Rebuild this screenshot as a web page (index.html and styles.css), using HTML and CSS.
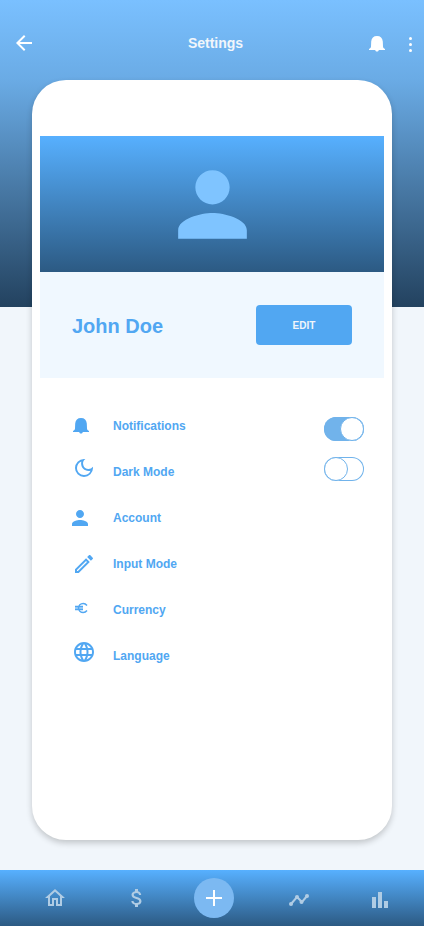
FILE: index.html
```html
<!DOCTYPE html>
<html lang="en">
<head>
<meta charset="utf-8">
<meta name="viewport" content="width=device-width, initial-scale=1">
<title>Settings</title>
<link rel="stylesheet" href="styles.css">
</head>
<body>
<header class="topbar">
  <button class="icon-button" type="button" aria-label="Back">
    <svg width="24" height="24" viewBox="0 0 24 24"><path d="M20 11H7.830l5.590-5.590L12 4l-8 8 8 8 1.410-1.410L7.830 13H20v-2z"/></svg>
  </button>
  <h1 class="title">Settings</h1>
  <div class="actions">
    <button class="icon-button" type="button" aria-label="Notifications">
      <svg width="24" height="24" viewBox="0 0 24 24"><path d="M12 5C8.500 5 6.500 7 6.200 10.500L6 15.500c0 1.300-.8 2-2 2.500v1h6.200c.3 1 .9 1.500 1.800 1.500s1.500-.5 1.800-1.500H20v-1c-1.200-.5-2-1.200-2-2.500l-.2-5C17.500 7 15.500 5 12 5z"/></svg>
    </button>
    <button class="icon-button" type="button" aria-label="More">
      <svg width="10" height="24" viewBox="0 0 10 24"><circle cx="5.500" cy="7.500" r="1.500"/><circle cx="5.500" cy="13.500" r="1.500"/><circle cx="5.500" cy="19.500" r="1.500"/></svg>
    </button>
  </div>
</header>

<main class="card">
  <section class="profile">
    <div class="cover">
      <svg width="103" height="103" viewBox="0 0 24 24"><path d="M12 12c2.210 0 4-1.790 4-4s-1.790-4-4-4-4 1.790-4 4 1.790 4 4 4zm0 2c-2.670 0-8 1.340-8 4v2h16v-2c0-2.660-5.330-4-8-4z"/></svg>
    </div>
    <div class="identity">
      <h2 class="name">John Doe</h2>
      <button class="edit" type="button">EDIT</button>
    </div>
  </section>

  <section class="settings">
    <ul class="options">
      <li class="option">
        <svg width="24" height="32" viewBox="0 0 24 32"><path d="M9 8C5.500 8 3.500 10 3.200 13.500L3 18.500c0 1.300-.8 2-2 2.500v1h6.200c.3 1 .9 1.500 1.800 1.500s1.500-.5 1.800-1.500H17v-1c-1.200-.5-2-1.200-2-2.500l-.2-5C14.500 10 12.500 8 9 8z"/></svg>
        <label for="notifications">Notifications</label>
      </li>
      <li class="option">
        <svg width="24" height="32" viewBox="0 0 24 32"><path d="M9.370 5.510A7.350 7.350 0 0 0 9.100 7.500c0 4.080 3.320 7.400 7.400 7.400.68 0 1.350-.09 1.990-.27A7.014 7.014 0 0 1 12 19c-3.860 0-7-3.140-7-7 0-2.930 1.810-5.450 4.370-6.490zM12 3a9 9 0 1 0 9 9c0-.46-.04-.92-.1-1.360a5.389 5.389 0 0 1-4.400 2.260 5.403 5.403 0 0 1-3.140-9.800C12.920 3.040 12.460 3 12 3z"/></svg>
        <label for="dark-mode">Dark Mode</label>
      </li>
      <li class="option">
        <svg width="24" height="32" viewBox="0 0 24 32"><path d="M8 16c2.210 0 4-1.790 4-4s-1.790-4-4-4-4 1.790-4 4 1.790 4 4 4zm0 2c-2.670 0-8 1.340-8 4v2h16v-2c0-2.660-5.330-4-8-4z"/></svg>
        <span>Account</span>
      </li>
      <li class="option">
        <svg width="24" height="32" viewBox="0 -4 24 32"><path d="M14.060 9.020l.92.92L5.920 19H5v-.92l9.060-9.060M17.660 3c-.25 0-.51.1-.7.290l-1.830 1.830 3.750 3.750 1.830-1.830a.996.996 0 0 0 0-1.410l-2.340-2.340c-.2-.2-.45-.29-.71-.29zm-3.600 3.190L3 17.250V21h3.750L17.810 9.940l-3.750-3.750z"/></svg>
        <span>Input Mode</span>
      </li>
      <li class="option">
        <svg width="24" height="32" viewBox="0 0 24 32"><path class="faint" d="M3 12h8v4H3z"/><path class="line" d="M15 11.500C14 10.200 12.800 9.500 11.200 9.500c-2.700 0-4.700 2-4.700 4.500s2 4.500 4.700 4.500c1.600 0 2.800-.7 3.800-2M3 12.500h8M3 15.500h8"/></svg>
        <span>Currency</span>
      </li>
      <li class="option">
        <svg width="24" height="32" viewBox="0 0 24 32"><path d="M11.990 2C6.470 2 2 6.480 2 12s4.470 10 9.990 10C17.520 22 22 17.520 22 12S17.520 2 11.990 2zm6.930 6h-2.950a15.650 15.650 0 0 0-1.380-3.560A8.030 8.030 0 0 1 18.920 8zM12 4.040c.83 1.200 1.480 2.530 1.910 3.960h-3.820c.43-1.430 1.080-2.760 1.910-3.960zM4.260 14C4.100 13.360 4 12.690 4 12s.1-1.360.26-2h3.380c-.08.66-.14 1.320-.14 2s.06 1.340.14 2H4.260zm.82 2h2.950c.32 1.250.78 2.450 1.380 3.560A7.987 7.987 0 0 1 5.080 16zm2.950-8H5.080a7.987 7.987 0 0 1 4.330-3.560A15.650 15.650 0 0 0 8.030 8zM12 19.960c-.83-1.200-1.480-2.530-1.910-3.960h3.820c-.43 1.430-1.080 2.760-1.910 3.960zM14.340 14H9.660c-.09-.66-.16-1.320-.16-2s.07-1.350.16-2h4.680c.09.65.16 1.320.16 2s-.07 1.340-.16 2zm.25 5.560c.6-1.110 1.060-2.310 1.380-3.560h2.950a8.030 8.030 0 0 1-4.330 3.560zM16.360 14c.08-.66.14-1.320.14-2s-.06-1.340-.14-2h3.380c.16.64.26 1.310.26 2s-.1 1.360-.26 2h-3.380z"/></svg>
        <span>Language</span>
      </li>
    </ul>
    <div class="toggles">
      <input class="toggle" type="checkbox" id="notifications" checked>
      <input class="toggle" type="checkbox" id="dark-mode">
    </div>
  </section>
</main>

<nav class="tabs" aria-label="Main">
  <a class="tab" href="#home" aria-label="Home"><svg width="24" height="24" viewBox="0 0 24 24"><path d="M12 5.690l5 4.500V18h-2v-6H9v6H7v-7.810l5-4.500M12 3L2 12h3v8h6v-6h2v6h6v-8h3L12 3z"/></svg></a>
  <a class="tab" href="#money" aria-label="Money"><svg width="24" height="24" viewBox="0 0 24 24"><path d="M11.800 10.900c-2.270-.59-3-1.200-3-2.150 0-1.090 1.010-1.850 2.700-1.850 1.780 0 2.440.85 2.500 2.100h2.210c-.07-1.720-1.120-3.300-3.210-3.810V3h-3v2.160c-1.940.42-3.500 1.680-3.500 3.610 0 2.310 1.910 3.460 4.700 4.130 2.500.6 3 1.480 3 2.410 0 .69-.49 1.790-2.700 1.790-2.060 0-2.870-.92-2.980-2.100h-2.200c.12 2.190 1.760 3.420 3.680 3.830V21h3v-2.150c1.950-.37 3.500-1.500 3.500-3.550 0-2.840-2.430-3.810-4.700-4.400z"/></svg></a>
  <a class="tab add" href="#add" aria-label="Add"><svg width="24" height="24" viewBox="0 0 24 24"><path d="M11 4h2v7h7v2h-7v7h-2v-7H4v-2h7z"/></svg></a>
  <a class="tab" href="#trends" aria-label="Trends"><svg width="24" height="24" viewBox="0 0 24 24"><path class="trend" d="M4 18l6-7 5 5 5-6"/><circle cx="4" cy="18" r="2"/><circle cx="10" cy="11" r="2"/><circle cx="14.500" cy="16" r="2"/><circle cx="20" cy="10" r="2"/></svg></a>
  <a class="tab" href="#stats" aria-label="Statistics"><svg width="24" height="24" viewBox="0 0 24 24"><path d="M4 11h4v11H4zM10 6h4v16h-4zM16 15h4v7h-4z"/></svg></a>
</nav>
</body>
</html>
```
FILE: styles.css
```css
*,
*::before {
  box-sizing: border-box;
}

body {
  margin: 0;
  min-height: 100vh;
  display: flex;
  flex-direction: column;
  font-family: "Liberation Sans", Arial, sans-serif;
  font-weight: 700;
  color: #51a7f2;
  background: linear-gradient(#7ac0ff, #6aabe5 80px, #23425f) 0 0 / 100% 307px no-repeat, #f1f6fb;
}

svg {
  display: block;
  fill: currentColor;
}

.topbar {
  display: grid;
  grid-template-columns: 1fr auto 1fr;
  align-items: center;
  height: 80px;
  padding: 6px 9px 0 12px;
  color: #fff;
}

.title {
  margin: 0;
  padding-left: 4px;
  font-size: 14px;
  line-height: 20px;
  color: #f1f6fb;
}

.icon-button {
  justify-self: start;
  padding: 0;
  border: 0;
  background: none;
  color: inherit;
}

.actions {
  justify-self: end;
  display: flex;
  gap: 16px;
}

.card {
  flex: 1;
  margin: 0 32px 30px;
  padding: 56px 8px;
  border-radius: 34px;
  background: #fff;
  box-shadow: 0 3px 6px rgba(0, 0, 0, 0.2);
}

.cover {
  display: flex;
  align-items: center;
  justify-content: center;
  height: 136px;
  color: #7fc4ff;
  background: linear-gradient(#57b0ff, #2c5a83);
}

.identity {
  display: flex;
  align-items: center;
  justify-content: space-between;
  height: 106px;
  padding: 0 32px;
  background: #f0f8ff;
}

.name {
  margin: 0;
  padding-top: 2px;
  font-size: 20px;
  line-height: 24px;
}

.edit {
  width: 96px;
  height: 40px;
  padding: 0;
  border: 0;
  border-radius: 4px;
  background: #51a7f2;
  color: #f1f6fb;
  font: inherit;
  font-size: 10px;
}

.settings {
  display: flex;
  justify-content: space-between;
  padding: 25px 20px 0 32px;
}

.options {
  margin: 0;
  padding: 0;
  list-style: none;
}

.option {
  display: flex;
  align-items: center;
  gap: 17px;
  height: 46px;
  font-size: 12px;
  line-height: 16px;
}

.line {
  fill: none;
  stroke: currentColor;
  stroke-width: 1.4;
}

.faint {
  opacity: 0.5;
}

.toggles {
  display: flex;
  flex-direction: column;
  gap: 16px;
  padding-top: 14px;
}

.toggle {
  appearance: none;
  display: flex;
  width: 40px;
  height: 24px;
  margin: 0;
  border-radius: 12px;
  background: #fff;
  box-shadow: inset 0 0 0 1px #71b3eb;
}

.toggle::before {
  content: "";
  width: 24px;
  height: 24px;
  border: 1px solid #71b3eb;
  border-radius: 50%;
  background: #fff;
}

.toggle:checked {
  justify-content: flex-end;
  background: #71b3eb;
}

.tabs {
  display: grid;
  grid-template-columns: 82fr 82fr 72fr 98fr 64fr;
  align-items: center;
  justify-items: center;
  height: 56px;
  padding: 0 12px 0 14px;
  background: linear-gradient(#57b0ff, #2c5a83);
}

.tab {
  color: #b0cce4;
}

.add {
  padding: 8px;
  border-radius: 50%;
  background: #7cb9f2;
  color: #fff;
}

.trend {
  fill: none;
  stroke: currentColor;
  stroke-width: 2;
}
```
